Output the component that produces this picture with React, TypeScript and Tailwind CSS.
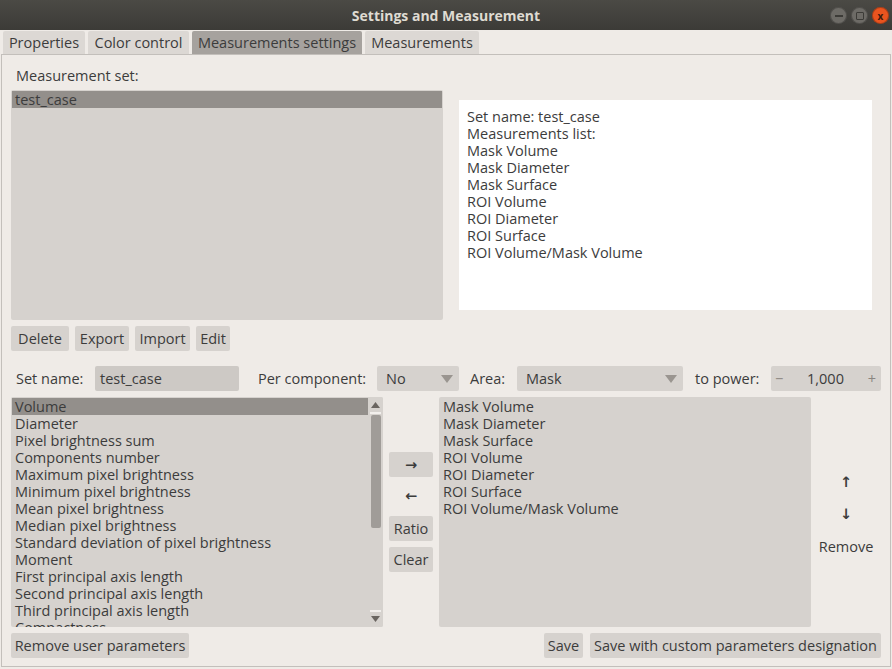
import React from 'react'

const font = { fontFamily: '"Open Sans", "DejaVu Sans", sans-serif' }

const available = [
  'Volume',
  'Diameter',
  'Pixel brightness sum',
  'Components number',
  'Maximum pixel brightness',
  'Minimum pixel brightness',
  'Mean pixel brightness',
  'Median pixel brightness',
  'Standard deviation of pixel brightness',
  'Moment',
  'First principal axis length',
  'Second principal axis length',
  'Third principal axis length',
  'Compactness',
]

const chosen = [
  'Mask Volume',
  'Mask Diameter',
  'Mask Surface',
  'ROI Volume',
  'ROI Diameter',
  'ROI Surface',
  'ROI Volume/Mask Volume',
]

function Btn({ children, className = '' }: { children: React.ReactNode; className?: string }) {
  return (
    <div className={`h-[25px] px-[5px] flex items-center justify-center rounded-[2px] bg-[#d6d2ce] whitespace-nowrap ${className}`}>
      {children}
    </div>
  )
}

function Combo({ value, className = '' }: { value: string; className?: string }) {
  return (
    <div className={`h-[25px] flex items-center justify-between pl-[9px] pr-[6px] rounded-[2px] bg-[#d6d2ce] ${className}`}>
      <span>{value}</span>
      <svg width="12" height="8" viewBox="0 0 12 8">
        <path d="M0 0 L12 0 L6 8 Z" fill="#9a9590" />
      </svg>
    </div>
  )
}

function Tab({ children, active = false, className = '' }: { children: React.ReactNode; active?: boolean; className?: string }) {
  return (
    <div
      className={`h-[23px] flex items-center justify-center rounded-t-[2px] whitespace-nowrap ${
        active ? 'bg-[#a6a29e]' : 'bg-[#dcd8d4]'
      } ${className}`}
    >
      {children}
    </div>
  )
}

function WinBtn({ color, children }: { color: string; children: React.ReactNode }) {
  return (
    <div
      className={`w-[17px] h-[17px] rounded-full flex items-center justify-center ${color}`}
      style={{ boxShadow: 'inset 0 0 0 1px rgba(0,0,0,0.25)' }}
    >
      {children}
    </div>
  )
}

export default function App() {
  return (
    <div className="w-[892px] h-[669px] bg-[#efebe7] text-[#3c3c3c] text-[14.5px] flex flex-col overflow-hidden" style={font}>
      {/* Title bar */}
      <div className="h-[30px] shrink-0 relative flex items-center justify-center bg-gradient-to-b from-[#4b4a45] to-[#3c3b37]">
        <span className="font-bold text-[14px] text-[#dfdbd2]">Settings and Measurement</span>
        <div className="absolute right-[3px] top-[7px] flex gap-[4px]">
          <WinBtn color="bg-[#6d6b66]">
            <div className="w-[8px] h-[2px] bg-[#3c3b37]" />
          </WinBtn>
          <WinBtn color="bg-[#6d6b66]">
            <div className="w-[8px] h-[8px] border-[1.5px] border-[#3c3b37] rounded-[1px]" />
          </WinBtn>
          <WinBtn color="bg-[#e9541f]">
            <span className="text-[10px] leading-none font-bold text-[#3c1a0c]">x</span>
          </WinBtn>
        </div>
      </div>

      {/* Tabs */}
      <div className="h-[23px] shrink-0 flex items-end pl-[3px] gap-[3px] mt-[1px]">
        <Tab className="w-[82px]">Properties</Tab>
        <Tab className="w-[101px]">Color control</Tab>
        <Tab active className="w-[170px]">Measurements settings</Tab>
        <Tab className="w-[114px]">Measurements</Tab>
      </div>

      {/* Panel */}
      <div className="flex-1 mx-[1px] mb-[2px] border border-[#c3bfbb] flex flex-col px-[9px] pt-[11px]">
        <div className="pl-[5px] h-[20px] leading-[20px]">Measurement set:</div>
        <div className="mt-[4px] flex h-[230px]">
          <div className="w-[432px] bg-[#d6d2ce] rounded-[2px] p-[1px]">
            <div className="h-[17px] leading-[17px] bg-[#938f8b] pl-[3px]">test_case</div>
          </div>
          <div className="flex-1 flex items-center pl-[16px] pr-[9px]">
            <div className="w-full h-[210px] bg-white pl-[8px] pt-[8px] leading-[17px]">
              <div>Set name: test_case</div>
              <div>Measurements list:</div>
              {chosen.map((c) => (
                <div key={c}>{c}</div>
              ))}
            </div>
          </div>
        </div>

        <div className="mt-[6px] flex gap-[6px]">
          <Btn className="w-[58px]">Delete</Btn>
          <Btn className="w-[54px]">Export</Btn>
          <Btn className="w-[55px]">Import</Btn>
          <Btn className="w-[34px]">Edit</Btn>
        </div>

        <div className="mt-[15px] flex items-center h-[25px]">
          <span className="pl-[5px] w-[84px]">Set name:</span>
          <div className="w-[144px] h-[25px] bg-[#cdc9c5] rounded-[2px] flex items-center pl-[5px]">test_case</div>
          <span className="ml-[19px] w-[119px]">Per component:</span>
          <Combo value="No" className="w-[82px]" />
          <span className="ml-[11px] w-[47px]">Area:</span>
          <Combo value="Mask" className="w-[166px]" />
          <span className="ml-[12px] w-[76px]">to power:</span>
          <div className="w-[110px] h-[25px] bg-[#d6d2ce] rounded-[2px] flex items-center justify-between pl-[4px] pr-[5px]">
            <span className="text-[#8a8580]">−</span>
            <span>1,000</span>
            <span className="text-[#8a8580]">+</span>
          </div>
        </div>

        <div className="mt-[6px] flex h-[230px]">
          <div className="w-[372px] bg-[#d6d2ce] rounded-[2px] flex overflow-hidden">
            <div className="flex-1 overflow-hidden pt-[1px] pl-[1px]">
              {available.map((a, i) => (
                <div key={a} className={`h-[17px] leading-[17px] pl-[3px] whitespace-nowrap ${i === 0 ? 'bg-[#938f8b]' : ''}`}>
                  {a}
                </div>
              ))}
            </div>
            <div className="w-[15px] flex flex-col items-center bg-[#d6d2ce] py-[2px]">
              <svg width="9" height="6" viewBox="0 0 9 6" className="mt-[3px]">
                <path d="M0 6 L9 6 L4.5 0 Z" fill="#6a6560" />
              </svg>
              <div className="w-[11px] h-[2px] bg-[#f2efec] mt-[4px]" />
              <div className="w-[10px] h-[113px] bg-[#a09c98] rounded-[2px] mt-[1px]" />
              <div className="flex-1" />
              <div className="w-[11px] h-[2px] bg-[#f2efec] mb-[4px]" />
              <svg width="9" height="6" viewBox="0 0 9 6" className="mb-[3px]">
                <path d="M0 0 L9 0 L4.5 6 Z" fill="#6a6560" />
              </svg>
            </div>
          </div>
          <div className="w-[56px] flex flex-col items-center pt-[55px]">
            <Btn className="w-[44px] font-semibold">→</Btn>
            <div className="h-[25px] mt-[6px] flex items-center font-semibold">←</div>
            <Btn className="w-[44px] mt-[8px]">Ratio</Btn>
            <Btn className="w-[44px] mt-[6px]">Clear</Btn>
          </div>
          <div className="w-[372px] bg-[#d6d2ce] rounded-[2px] pt-[1px] pl-[4px] leading-[17px]">
            {chosen.map((c) => (
              <div key={c}>{c}</div>
            ))}
          </div>
          <div className="flex-1 flex flex-col items-center justify-center pt-[4px]">
            <div className="h-[25px] flex items-center font-semibold">↑</div>
            <div className="h-[25px] mt-[7px] flex items-center font-semibold">↓</div>
            <div className="h-[25px] mt-[8px] flex items-center">Remove</div>
          </div>
        </div>

        <div className="mt-[6px] flex items-center">
          <Btn className="w-[178px]">Remove user parameters</Btn>
          <div className="flex-1" />
          <Btn className="w-[39px]">Save</Btn>
          <Btn className="ml-[7px] w-[291px]">Save with custom parameters designation</Btn>
        </div>
      </div>
    </div>
  )
}
